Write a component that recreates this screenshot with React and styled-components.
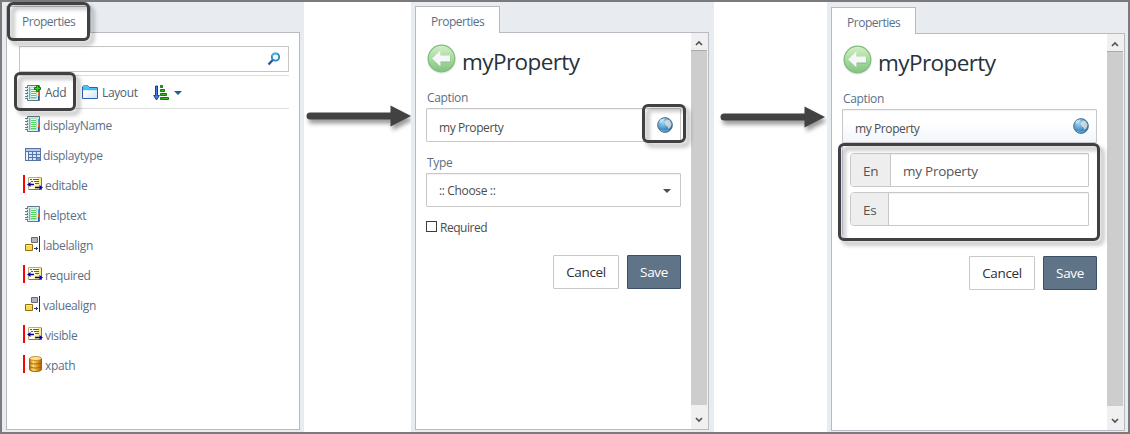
import React from 'react';
import styled, { createGlobalStyle } from 'styled-components';

const GlobalStyle = createGlobalStyle`
	* {
		box-sizing: border-box;
	}

	body {
		margin: 0;
		background: #fff;
		font-family: 'Open Sans', 'Noto Sans', sans-serif;
		font-size: 12px;
		letter-spacing: -0.48px;
		color: #5b7087;
	}

	svg {
		display: block;
		flex: none;
	}
`;

const Frame = styled.div`
	display: flex;
	width: 1130px;
	height: 434px;
	border: 2px solid #7c7a7b;
	background: #fff;
`;

const Panel = styled.section`
	position: relative;
	display: flex;
	flex-direction: column;
	flex: none;
	width: ${(props) => props.$width}px;
	padding: ${(props) => props.$top}px ${(props) => props.$right}px 2px 4px;
	background: #e8ebf0;
`;

const Tab = styled.div`
	position: relative;
	z-index: 1;
	width: 85px;
	height: 27px;
	margin-bottom: -1px;
	padding-left: 15px;
	border: 1px solid #b7bbc2;
	border-bottom: 0;
	background: #fff;
	line-height: 30px;
`;

const Body = styled.div`
	display: flex;
	width: 294px;
	height: 398px;
	border: 1px solid #b7bbc2;
	background: #fff;
`;

const Gap = styled.div`
	flex: none;
	width: ${(props) => props.$width}px;
	padding: ${(props) => props.$top}px 0 0 ${(props) => props.$left}px;

	svg {
		overflow: visible;
		filter: drop-shadow(2px 4px 2px rgba(0, 0, 0, 0.4));
	}
`;

const Highlight = styled.div`
	position: absolute;
	z-index: 2;
	left: ${(props) => props.$x}px;
	top: ${(props) => props.$y}px;
	width: ${(props) => props.$w}px;
	height: ${(props) => props.$h}px;
	border: 3px solid #414143;
	border-radius: 6px;
	filter: drop-shadow(4px 4px 2px rgba(0, 0, 0, 0.32));
	pointer-events: none;
`;

const List = styled.div`
	width: 100%;
	padding: 13px 10px 0 12px;
`;

const Search = styled.div`
	display: flex;
	align-items: center;
	justify-content: flex-end;
	height: 26px;
	padding-right: 7px;
	border: 1px solid #c6c6c6;
`;

const Toolbar = styled.div`
	display: flex;
	align-items: center;
	height: 34px;
	margin: 3px 0 1px;
	padding: 1px 0 0 6px;
	border-top: 1px solid #ddd;
	border-bottom: 1px solid #ddd;
	color: #4e5f73;
	letter-spacing: -0.36px;
`;

const Tool = styled.div`
	display: flex;
	align-items: center;
	gap: 4px;
	width: ${(props) => props.$width}px;
`;

const Row = styled.div`
	display: flex;
	align-items: center;
	height: 30px;
	padding-left: ${(props) => (props.$marked ? 4 : 6)}px;
	letter-spacing: -0.35px;
`;

const Mark = styled.span`
	width: 2px;
	height: 18px;
	margin: 0 2px 2px 0;
	background: #f00;
`;

const RowLabel = styled.span`
	margin-left: 1px;
`;

const IconCell = styled.span`
	display: flex;
	justify-content: ${(props) => (props.$center ? 'center' : 'flex-start')};
	width: 17px;
	margin-bottom: 2px;
`;

const Form = styled.div`
	flex: 1;
	padding: 11px 10px 0 10px;
`;

const Heading = styled.div`
	display: flex;
	gap: 5px;
	height: 44px;
`;

const Title = styled.h1`
	margin: 3px 0 0;
	color: #26323c;
	font-size: 22.5px;
	font-weight: 400;
	line-height: 30px;
	letter-spacing: -0.58px;
`;

const Label = styled.div`
	height: 20px;
	padding-left: 1px;
	line-height: 19px;
	letter-spacing: -0.36px;
`;

const Field = styled.div`
	display: flex;
	align-items: center;
	justify-content: space-between;
	height: 34px;
	padding: 4px ${(props) => props.$right}px 0 12px;
	border: 1px solid #c8c8c8;
	border-radius: 1px;
	box-shadow: inset 0 1px 1px rgba(0, 0, 0, 0.06);
	background: ${(props) => (props.$tinted ? 'linear-gradient(#fff 40%, #f1f5fb)' : '#fff')};
	color: #4d4d4d;
	letter-spacing: -0.4px;

	svg {
		margin-top: -5px;
	}
`;

const ChooseField = styled(Field)`
	padding-top: 1px;
	letter-spacing: -0.35px;

	svg {
		margin-top: 0;
	}
`;

const TypeLabel = styled(Label)`
	margin-top: 11px;
`;

const Check = styled.div`
	display: flex;
	align-items: center;
	gap: 3px;
	height: 16px;
	margin-top: 12px;
	padding-top: 1px;
	color: #4d4d4d;
`;

const Box = styled.span`
	width: 11px;
	height: 11px;
	margin-bottom: 2px;
	border: 1px solid #3c3c3c;
`;

const Buttons = styled.div`
	display: flex;
	justify-content: flex-end;
	gap: 8px;
	margin-top: ${(props) => props.$top}px;
`;

const Button = styled.button`
	width: ${(props) => (props.$primary ? 54 : 66)}px;
	height: 34px;
	padding: 0;
	border: 1px solid ${(props) => (props.$primary ? '#3b5068' : '#c8c8c8')};
	border-radius: 1px;
	background: ${(props) => (props.$primary ? '#5f7487' : '#fff')};
	color: ${(props) => (props.$primary ? '#fff' : '#2e2e33')};
	font: 13.5px 'Open Sans', sans-serif;
	letter-spacing: -0.35px;
`;

const Languages = styled.div`
	display: flex;
	flex-direction: column;
	gap: 5px;
	height: 92px;
	padding: 10px 8px 0 7px;
	border-left: 1px solid #ccd3e4;
`;

const Group = styled.div`
	display: flex;
	height: 34px;
	border: 1px solid #c8c8c8;
	border-radius: 4px 1px 1px 4px;
	color: #555;
	font-size: 13.5px;
	line-height: 34px;
	letter-spacing: -0.25px;
`;

const Addon = styled.span`
	padding: 0 12px;
	width: ${(props) => props.$width}px;
	border-right: 1px solid #c8c8c8;
	border-radius: 3px 0 0 3px;
	background: #eee;
`;

const Value = styled.span`
	flex: 1;
	padding-left: 12px;
	box-shadow: inset 0 1px 1px rgba(0, 0, 0, 0.06);
`;

const Scrollbar = styled.div`
	display: flex;
	flex-direction: column;
	flex: none;
	width: 17px;
	padding-right: 1px;
	background: #f0f0f0;
`;

const Thumb = styled.div`
	height: 355px;
	border-top: 1px solid #aaa;
	background: #cdcdcd;
`;

const ScrollButton = styled.div`
	display: flex;
	align-items: center;
	justify-content: center;
	height: ${(props) => props.$height}px;
	padding-top: ${(props) => props.$shift}px;
`;

const Arrow = () => (
	<svg width="105" height="22" viewBox="0 0 105 22">
		<path d="M4 11h82" stroke="#424242" strokeWidth="7" strokeLinecap="round" />
		<path d="M84.500 .5v21L105 11z" fill="#424242" />
	</svg>
);

const SearchIcon = () => (
	<svg width="14" height="14" viewBox="0 0 14 14" fill="none">
		<path d="M1.500 12.500l4.500-4.800" stroke="#245a9e" strokeWidth="2.400" />
		<circle cx="8.500" cy="5" r="3.700" stroke="#2b83c4" strokeWidth="1.800" fill="#f3faff" />
		<path d="M5 4a3.700 3.700 0 0 1 5-2.300" stroke="#46b3df" strokeWidth="1.500" />
	</svg>
);

const NotebookIcon = ({ add }) => (
	<svg width="16" height="16" viewBox="0 0 16 16">
		<path d="M2.500 .5h12v15h-12z" fill="#d9ecf4" stroke="#63798b" />
		<path d="M4 2h1v12H4z" fill="#8ca2b2" />
		<path d="M5.500 2.500h6v11h-6z" fill="#e6ffe2" stroke="#b5ddd3" />
		<path d="M6 4.500h5M6 6.500h5M6 8.500h5M6 10.500h5M6 12.500h5" stroke="#4fd653" />
		<path d="M13.500 3v4" stroke="#47a2d8" />
		<path d="M13.500 7v4" stroke="#e77333" />
		<path d="M13.500 11v4" stroke="#3155a6" />
		<path d="M0 2.500h3M0 5.500h3M0 8.500h3M0 11.500h3M0 13.500h3" stroke="#6b7984" />
		<path d="M1 3.500h2M1 6.500h2M1 9.500h2M1 12.500h2" stroke="#d8dfe4" />
		{add && (
			<path d="M11.500 .5v2H9.500v2h2v2h2v-2h2v-2h-2v-2z" fill="#38d322" stroke="#107310" />
		)}
	</svg>
);

const FolderIcon = () => (
	<svg width="16" height="15" viewBox="0 0 16 15">
		<defs>
			<linearGradient id="folder" x2="1" y2="1">
				<stop offset=".3" stopColor="#fff" />
				<stop offset="1" stopColor="#cfe1f7" />
			</linearGradient>
		</defs>
		<path d="M.5 13.500V2L1.500 .8h4.500l1 1.700h8.500v11z" fill="url(#folder)" stroke="#2864b5" />
		<path d="M1 2.200L2 1.300h3.800l1 1.700H15v1.500H1z" fill="#43c3fa" />
		<path d="M1 4.700h14" stroke="#2c87d8" strokeWidth=".7" />
	</svg>
);

const SortIcon = () => (
	<svg width="17" height="16" viewBox="0 0 17 16">
		<path d="M2.500 1h2v9.500h1.800L3.500 15 .7 10.500h1.800z" fill="#3f7ce5" stroke="#173b9a" />
		<path d="M7.500 .5h2v2h-2zM7.500 4.500h4v2h-4zM7.500 8.500h6v2h-6zM7.500 12.500h8v2h-8z" fill="#39ba1a" stroke="#197514" />
	</svg>
);

const TableIcon = () => (
	<svg width="16" height="13" viewBox="0 0 16 13" shapeRendering="crispEdges">
		<path d="M0 0h16v13H0z" fill="#5574a7" />
		<path d="M1 1h14v2H1z" fill="#b7c9e7" />
		<path d="M1 4h2v8H1z" fill="#edf3fc" />
		<path d="M4 4h3v2H4zM8 4h3v2H8zM12 4h3v2h-3zM4 7h3v2H4zM8 7h3v2H8zM12 7h3v2h-3zM4 10h3v2H4zM8 10h3v2H8z" fill="#d9e6f7" />
		<path d="M12 10h3v2h-3z" fill="#7594c6" />
	</svg>
);

const BooleanIcon = () => (
	<svg width="16" height="14" viewBox="0 0 16 14">
		<path d="M1.500 .5h13v12h-13z" fill="#fffce6" stroke="#b5ae88" />
		<path d="M11 1h3v11H7z" fill="#f8ec9f" />
		<path d="M14.500 1v12M2 12.500h12" stroke="#77776f" />
		<path d="M3 2.500h2M6 2.500h6M7 4.500h5M8 6.500h4M4 4.500h2" stroke="#5c6068" />
		<path d="M2 7.500h5M8 10.500h6" stroke="#0505a5" strokeWidth="1.400" />
		<path d="M3.500 5v5L0 7.500zM12.500 8v5L16 10.500z" fill="#0505a5" />
	</svg>
);

const AlignIcon = () => (
	<svg width="16" height="16" viewBox="0 0 16 16">
		<path d="M6.500 1.500h6v5h-6z" fill="#b2b5bd" stroke="#656a78" />
		<path d="M.5 8.500h7v6h-7z" fill="#fbd94b" stroke="#966a17" />
		<path d="M1 9h6v1H1z" fill="#ffed98" />
		<path d="M14.500 0v16" stroke="#1c2b55" />
		<path d="M9 12.500h4M11.500 11v3" stroke="#1537a0" />
	</svg>
);

const DatabaseIcon = () => (
	<svg width="13" height="16" viewBox="0 0 13 16">
		<defs>
			<linearGradient id="barrel">
				<stop stopColor="#b86b10" />
				<stop offset=".3" stopColor="#ffdf70" />
				<stop offset=".65" stopColor="#e79b20" />
				<stop offset="1" stopColor="#a65b07" />
			</linearGradient>
		</defs>
		<path d="M.5 2.500v11c0 2.700 12 2.700 12 0v-11z" fill="url(#barrel)" stroke="#9e6211" />
		<ellipse cx="6.500" cy="2.500" rx="6" ry="2" fill="#ffe28a" stroke="#b47a20" strokeWidth=".8" />
		<path d="M.5 6.500c1.500 2 10.500 2 12 0M.5 10.500c1.500 2 10.500 2 12 0" fill="none" stroke="#9e6211" />
	</svg>
);

const BackIcon = () => (
	<svg width="31" height="31" viewBox="0 0 31 31">
		<defs>
			<linearGradient id="green" x2="0" y2="1">
				<stop stopColor="#d4eec7" />
				<stop offset=".5" stopColor="#a9dc9e" />
				<stop offset="1" stopColor="#83c382" />
			</linearGradient>
		</defs>
		<ellipse cx="15.500" cy="16" rx="14" ry="13.500" fill="#dfe5df" />
		<circle cx="15.500" cy="14.500" r="13.300" fill="url(#green)" stroke="#7fbc80" strokeWidth="1.300" />
		<path d="M6.300 15.200l8.700-8v4.500h9.500v7H15v4.500z" fill="#69a96d" opacity=".4" />
		<path d="M6 14.500l8.500-8v5h9.500v6h-9.500v5z" fill="#f7f7fb" />
	</svg>
);

const GlobeIcon = () => (
	<svg width="16" height="16" viewBox="0 0 16 16">
		<defs>
			<radialGradient id="globe" cx=".35" cy=".3" r=".8">
				<stop stopColor="#a5d8f3" />
				<stop offset=".5" stopColor="#579fd0" />
				<stop offset="1" stopColor="#1d5f99" />
			</radialGradient>
		</defs>
		<circle cx="8" cy="8" r="7.400" fill="url(#globe)" stroke="#4d718b" strokeWidth=".9" />
		<path d="M7.500 5l2.500-2.500 2.800 1L14.600 7l-1 3-2 2-1.200-2.800-1.400-.8-1-1.800z" fill="#e6e3de" opacity=".8" />
		<path d="M2 5l2-2.800 4-1-1.500 2.300L4 5.500z" fill="#edf5f5" opacity=".6" />
		<path d="M4 13.300c2.500 1.200 5 1 7.500-.3" fill="none" stroke="#78bce7" />
	</svg>
);

const Chevron = ({ down }) => (
	<svg width="8" height="6" viewBox="0 0 8 6">
		<path d={down ? 'M1 1l3 3 3-3' : 'M1 5l3-3 3 3'} fill="none" stroke="#555" strokeWidth="1.700" />
	</svg>
);

const Caret = ({ color }) => (
	<svg width="8" height="4" viewBox="0 0 8 4">
		<path d="M0 0h8L4 4z" fill={color} />
	</svg>
);

const properties = [
	{ name: 'displayName', icon: <NotebookIcon /> },
	{ name: 'displaytype', icon: <TableIcon /> },
	{ name: 'editable', icon: <BooleanIcon />, marked: true },
	{ name: 'helptext', icon: <NotebookIcon /> },
	{ name: 'labelalign', icon: <AlignIcon /> },
	{ name: 'required', icon: <BooleanIcon />, marked: true },
	{ name: 'valuealign', icon: <AlignIcon /> },
	{ name: 'visible', icon: <BooleanIcon />, marked: true },
	{ name: 'xpath', icon: <DatabaseIcon />, marked: true },
];

const PropertyRow = ({ name, icon, marked }) => (
	<Row $marked={marked}>
		{marked && <Mark />}
		<IconCell $center={name === 'xpath'}>{icon}</IconCell>
		<RowLabel>{name}</RowLabel>
	</Row>
);

const PropertyForm = ({ languages }) => (
	<Body>
		<Form>
			<Heading>
				<BackIcon />
				<Title>myProperty</Title>
			</Heading>
			<Label>Caption</Label>
			<Field $right={7} $tinted={languages}>
				my Property
				<GlobeIcon />
			</Field>
			{languages ? (
				<Languages>
					<Group>
						<Addon $width={40}>En</Addon>
						<Value>my Property</Value>
					</Group>
					<Group>
						<Addon $width={38}>Es</Addon>
						<Value />
					</Group>
				</Languages>
			) : (
				<>
					<TypeLabel>Type</TypeLabel>
					<ChooseField $right={9}>
						:: Choose ::
						<Caret color="#4d4d4d" />
					</ChooseField>
					<Check>
						<Box />
						Required
					</Check>
				</>
			)}
			<Buttons $top={languages ? 21 : 20}>
				<Button>Cancel</Button>
				<Button $primary>Save</Button>
			</Buttons>
		</Form>
		<Scrollbar>
			<ScrollButton $height={17} $shift={2}>
				<Chevron />
			</ScrollButton>
			<Thumb />
			<ScrollButton $height={24} $shift={5}>
				<Chevron down />
			</ScrollButton>
		</Scrollbar>
	</Body>
);

const App = () => (
	<>
		<GlobalStyle />
		<Frame>
			<Panel $width={302} $top={4} $right={4}>
				<Tab>Properties</Tab>
				<Body>
					<List>
						<Search>
							<SearchIcon />
						</Search>
						<Toolbar>
							<Tool $width={57}>
								<NotebookIcon add />
								Add
							</Tool>
							<Tool $width={71}>
								<FolderIcon />
								Layout
							</Tool>
							<Tool $width={40}>
								<SortIcon />
								<Caret color="#245b94" />
							</Tool>
						</Toolbar>
						{properties.map((property) => (
							<PropertyRow key={property.name} {...property} />
						))}
					</List>
				</Body>
				<Highlight $x={5} $y={0} $w={83} $h={39} />
				<Highlight $x={12} $y={70} $w={62} $h={39} />
			</Panel>
			<Gap $width={107} $top={103} $left={2}>
				<Arrow />
			</Gap>
			<Panel $width={303} $top={4} $right={5}>
				<Tab>Properties</Tab>
				<PropertyForm />
				<Highlight $x={231} $y={102} $w={44} $h={39} />
			</Panel>
			<Gap $width={113} $top={104} $left={6}>
				<Arrow />
			</Gap>
			<Panel $width={301} $top={5} $right={3}>
				<Tab>Properties</Tab>
				<PropertyForm languages />
				<Highlight $x={11} $y={141} $w={262} $h={98} />
			</Panel>
		</Frame>
	</>
);

export default App;
